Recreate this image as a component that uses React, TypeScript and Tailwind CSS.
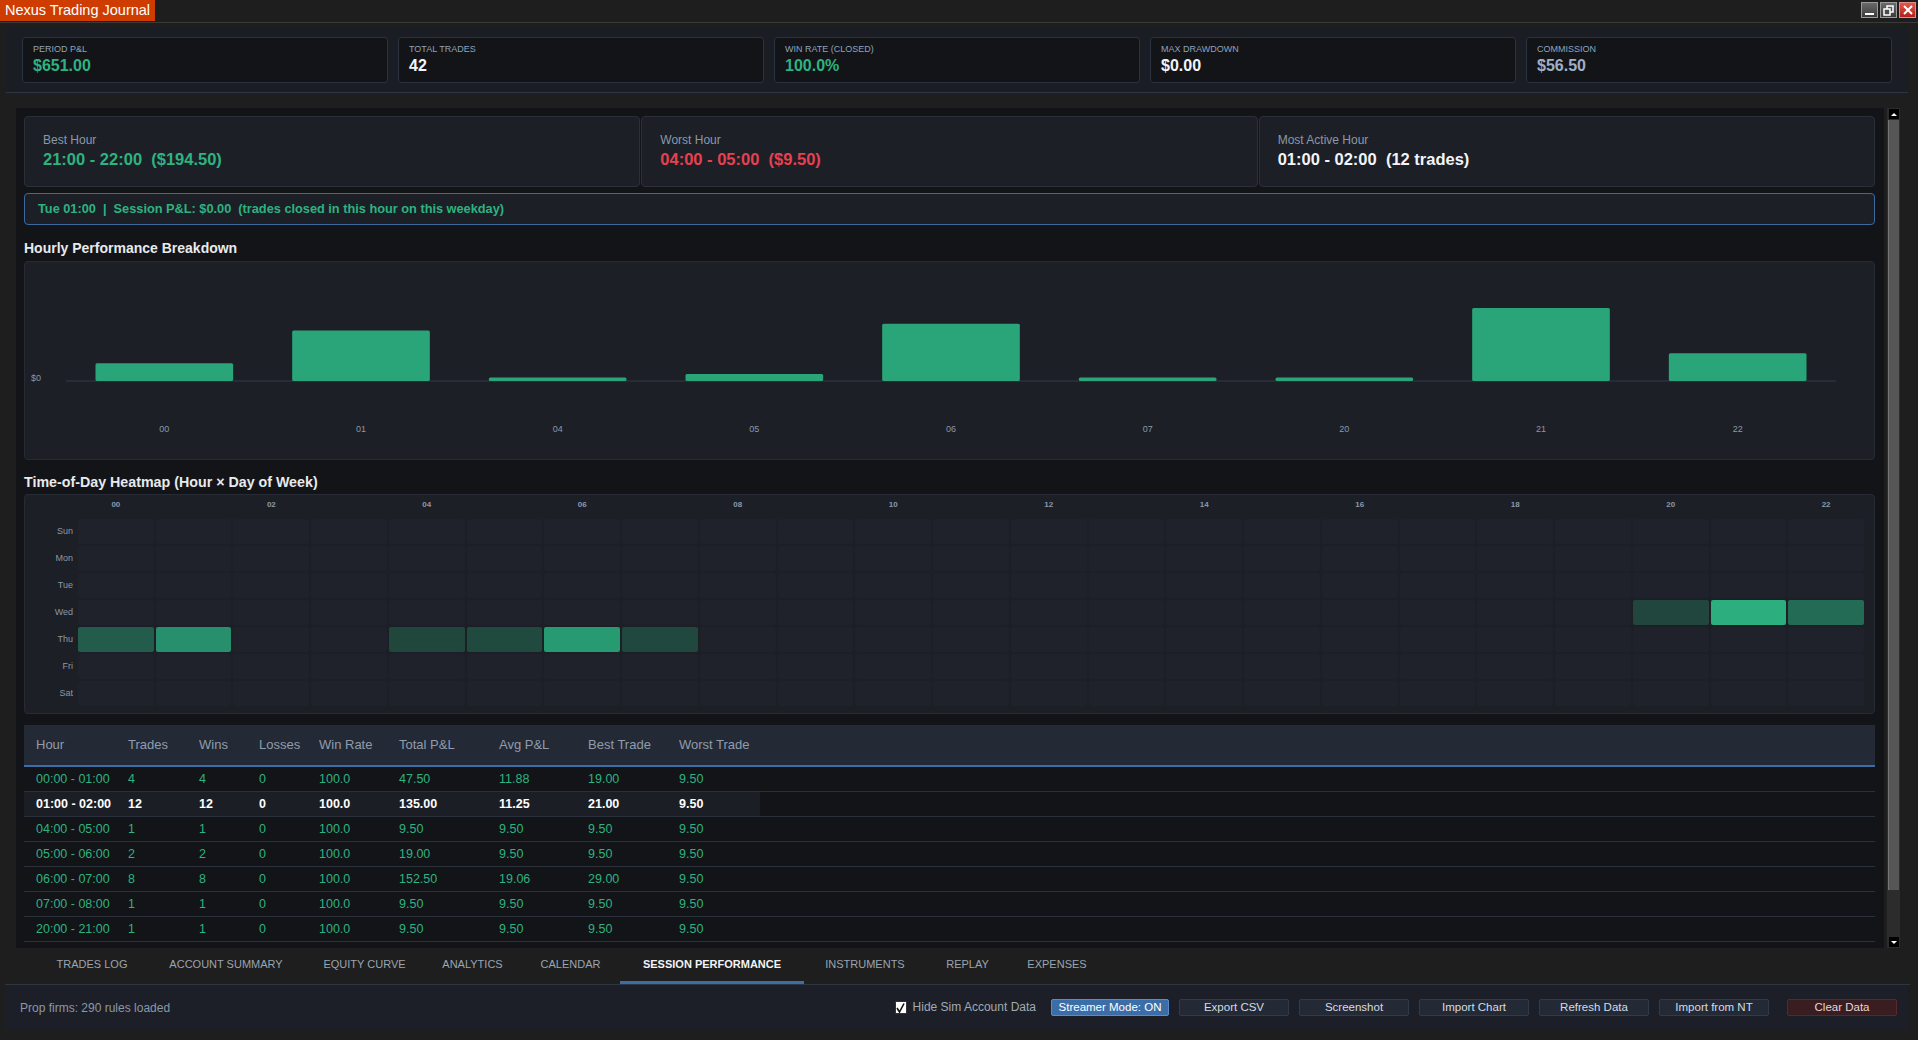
import React from "react";

const stats = [
  { label: "PERIOD P&L", value: "$651.00", color: "text-[#2db380]" },
  { label: "TOTAL TRADES", value: "42", color: "text-[#f2f4f7]" },
  { label: "WIN RATE (CLOSED)", value: "100.0%", color: "text-[#2db380]" },
  { label: "MAX DRAWDOWN", value: "$0.00", color: "text-[#f2f4f7]" },
  { label: "COMMISSION", value: "$56.50", color: "text-[#9fb0c6]" },
];

const bars = [
  { h: "00", v: 47.5 },
  { h: "01", v: 135 },
  { h: "04", v: 9.5 },
  { h: "05", v: 19 },
  { h: "06", v: 152.5 },
  { h: "07", v: 9.5 },
  { h: "20", v: 9.5 },
  { h: "21", v: 194.5 },
  { h: "22", v: 74 },
];

const days = ["Sun", "Mon", "Tue", "Wed", "Thu", "Fri", "Sat"];
const heat: Record<string, string> = {
  "3-20": "#21463d",
  "3-21": "#2cae7e",
  "3-22": "#246b56",
  "4-0": "#245c4b",
  "4-1": "#288f6c",
  "4-4": "#21473d",
  "4-5": "#214a3f",
  "4-6": "#289a72",
  "4-7": "#21483e",
};

const colW = [92, 71, 60, 60, 80, 100, 89, 91, 93];
const headers = ["Hour", "Trades", "Wins", "Losses", "Win Rate", "Total P&L", "Avg P&L", "Best Trade", "Worst Trade"];
const rows = [
  ["00:00 - 01:00", "4", "4", "0", "100.0", "47.50", "11.88", "19.00", "9.50"],
  ["01:00 - 02:00", "12", "12", "0", "100.0", "135.00", "11.25", "21.00", "9.50"],
  ["04:00 - 05:00", "1", "1", "0", "100.0", "9.50", "9.50", "9.50", "9.50"],
  ["05:00 - 06:00", "2", "2", "0", "100.0", "19.00", "9.50", "9.50", "9.50"],
  ["06:00 - 07:00", "8", "8", "0", "100.0", "152.50", "19.06", "29.00", "9.50"],
  ["07:00 - 08:00", "1", "1", "0", "100.0", "9.50", "9.50", "9.50", "9.50"],
  ["20:00 - 21:00", "1", "1", "0", "100.0", "9.50", "9.50", "9.50", "9.50"],
];

const tabs = [
  { t: "TRADES LOG", w: 110 },
  { t: "ACCOUNT SUMMARY", w: 158 },
  { t: "EQUITY CURVE", w: 119 },
  { t: "ANALYTICS", w: 97 },
  { t: "CALENDAR", w: 99 },
  { t: "SESSION PERFORMANCE", w: 184 },
  { t: "INSTRUMENTS", w: 122 },
  { t: "REPLAY", w: 83 },
  { t: "EXPENSES", w: 96 },
];

const buttons = ["Export CSV", "Screenshot", "Import Chart", "Refresh Data", "Import from NT"];

function Chart() {
  const left = 41;
  const slot = (1811 - 41) / 9;
  const bw = slot * 0.7;
  const base = 119;
  return (
    <svg width="1849" height="197" viewBox="0 0 1849 197" className="block">
      <text x="6" y="117" fontSize="9" fill="#8b98a8" dominantBaseline="middle" fontFamily="Liberation Sans, sans-serif">
        $0
      </text>
      <rect x={left} y={base - 1} width={1770} height={2} fill="#272c36" />
      {bars.map((b, i) => {
        const h = b.v * 0.375;
        const x = left + i * slot + (slot - bw) / 2;
        return (
          <g key={b.h}>
            <rect x={x} y={base - h} width={bw} height={h} rx={1.5} fill="#2aa579" />
            <text
              x={left + i * slot + slot / 2}
              y={168}
              fontSize="9"
              fill="#8b98a8"
              textAnchor="middle"
              dominantBaseline="middle"
              fontFamily="Liberation Sans, sans-serif"
            >
              {b.h}
            </text>
          </g>
        );
      })}
    </svg>
  );
}

function WinBtn({ kind }: { kind: "min" | "max" | "close" }) {
  const bg =
    kind === "close"
      ? "bg-[linear-gradient(#e4574d,#b3221a)] border-[#e88a84]"
      : "bg-[linear-gradient(#6a6a6a,#3c3c3c)] border-[#9a9a9a]";
  return (
    <div className={`w-[17px] h-[16px] border ${bg} flex items-center justify-center`}>
      {kind === "min" && <div className="w-[9px] h-[2px] bg-white mt-[7px]" />}
      {kind === "max" && (
        <svg width="11" height="11" viewBox="0 0 11 11">
          <rect x="4" y="1" width="6" height="6" fill="none" stroke="white" strokeWidth="1.5" />
          <rect x="1" y="4" width="6" height="6" fill="#4a4a4a" stroke="white" strokeWidth="1.5" />
        </svg>
      )}
      {kind === "close" && (
        <svg width="10" height="10" viewBox="0 0 10 10">
          <path d="M1 1 L9 9 M9 1 L1 9" stroke="white" strokeWidth="2" />
        </svg>
      )}
    </div>
  );
}

export default function App() {
  return (
    <div className="w-[1918px] h-[1040px] bg-[#1e1e1e] flex flex-col overflow-hidden font-['Liberation_Sans','Noto_Sans',sans-serif]">
      {/* Title bar */}
      <div className="h-[23px] flex items-start justify-between border-b border-[#3a3a3a] shrink-0">
        <div className="h-[21px] bg-[#cf3c00] px-[5px] flex items-center text-white text-[14.5px] leading-none">
          Nexus Trading Journal
        </div>
        <div className="flex gap-[2px] mt-[2px] mr-[2px]">
          <WinBtn kind="min" />
          <WinBtn kind="max" />
          <WinBtn kind="close" />
        </div>
      </div>

      {/* Stats panel */}
      <div className="mt-[4px] ml-[6px] w-[1902px] h-[66px] bg-[#1a1d24] border-b border-[#2e3646] px-[16px] pt-[10px] flex gap-[10px] shrink-0">
        {stats.map((s) => (
          <div
            key={s.label}
            className="w-[366px] h-[46px] rounded-[3px] border border-[#2a3140] bg-[#121418] px-[10px] pt-[6px]"
          >
            <div className="text-[9px] leading-[11px] text-[#8fa3ba]">{s.label}</div>
            <div className={`text-[16px] leading-[19px] font-bold mt-[1px] ${s.color}`}>{s.value}</div>
          </div>
        ))}
      </div>

      {/* Main area */}
      <div className="mt-[15px] ml-[16px] h-[840px] flex shrink-0">
        <div className="w-[1868px] h-[840px] bg-[#131418] overflow-hidden pl-[8px] pr-[9px] pt-[8px]">
          {/* top cards */}
          <div className="flex gap-[1px] h-[71px]">
            {[
              { l: "Best Hour", v: "21:00 - 22:00  ($194.50)", c: "text-[#2db380]" },
              { l: "Worst Hour", v: "04:00 - 05:00  ($9.50)", c: "text-[#e8404f]" },
              { l: "Most Active Hour", v: "01:00 - 02:00  (12 trades)", c: "text-[#f2f4f7]" },
            ].map((c) => (
              <div
                key={c.l}
                className="flex-1 rounded-[4px] border border-[#2a303a] bg-[#1c1f26] pl-[18px] pt-[16px]"
              >
                <div className="text-[12px] leading-[14px] text-[#8b98a8]">{c.l}</div>
                <div className={`text-[16.5px] leading-[20px] font-bold mt-[2px] whitespace-pre ${c.c}`}>{c.v}</div>
              </div>
            ))}
          </div>

          {/* info bar */}
          <div className="mt-[6px] h-[32px] rounded-[4px] border border-[#3a6aa0] bg-[#1c1f26] flex items-center pl-[13px] text-[12.75px] font-bold text-[#2db380] whitespace-pre">
            {"Tue 01:00  |  Session P&L: $0.00  (trades closed in this hour on this weekday)"}
          </div>

          <div className="mt-[15px] mb-[5px] h-[16px] leading-[16px] text-[14px] font-bold text-[#e8eaed]">
            Hourly Performance Breakdown
          </div>
          <div className="h-[199px] rounded-[4px] border border-[#262b35] bg-[#1c1f26]">
            <Chart />
          </div>

          <div className="mt-[14px] mb-[4px] h-[16px] leading-[16px] text-[14.25px] font-bold text-[#e8eaed]">
            Time-of-Day Heatmap (Hour × Day of Week)
          </div>
          <div className="h-[220px] rounded-[4px] border border-[#262b35] bg-[#1c1f26] pt-[4px] pr-[10px] flex">
            <div className="w-[48px] mr-[5px] shrink-0">
              <div className="h-[11px]" />
              <div className="mt-[9px] flex flex-col gap-[2px]">
                {days.map((d) => (
                  <div key={d} className="h-[25px] flex items-center justify-end text-[9px] text-[#8b98a8]">
                    {d}
                  </div>
                ))}
              </div>
            </div>
            <div className="flex-1">
              <div className="h-[11px] grid grid-cols-[repeat(23,minmax(0,1fr))] gap-x-[2px]">
                {Array.from({ length: 23 }).map((_, h) => (
                  <div key={h} className="text-center text-[8px] leading-[11px] font-bold text-[#8b98a8]">
                    {h % 2 === 0 ? String(h).padStart(2, "0") : ""}
                  </div>
                ))}
              </div>
              <div className="mt-[9px] grid grid-cols-[repeat(23,minmax(0,1fr))] gap-[2px]">
                {days.map((_, d) =>
                  Array.from({ length: 23 }).map((__, h) => {
                    const c = heat[`${d}-${h}`];
                    return (
                      <div
                        key={`${d}-${h}`}
                        className={`h-[25px] rounded-[2px] ${c ? "" : "bg-[#1f222a]"}`}
                        style={c ? { backgroundColor: c } : undefined}
                      />
                    );
                  })
                )}
              </div>
            </div>
          </div>

          {/* table */}
          <div className="mt-[11px] bg-[#131418]">
            <div className="h-[42px] bg-[#232a36] border-b-2 border-[#3a6ea8] flex items-center text-[13px] text-[#909cac]">
              {headers.map((h, i) => (
                <div key={h} className="pl-[12px] shrink-0" style={{ width: colW[i] }}>
                  {h}
                </div>
              ))}
            </div>
            {rows.map((r, ri) => {
              const hl = ri === 1;
              return (
                <div key={ri} className="h-[25px] border-b border-[#2a303b] flex items-stretch">
                  {r.map((v, i) => (
                    <div
                      key={i}
                      className={`pl-[12px] shrink-0 flex items-center text-[12.5px] ${
                        hl ? "bg-[#1b1e25] text-white font-bold" : "text-[#2db380]"
                      }`}
                      style={{ width: colW[i] }}
                    >
                      {v}
                    </div>
                  ))}
                </div>
              );
            })}
            <div className="h-[25px]" />
          </div>
        </div>

        {/* scrollbar */}
        <div className="ml-[3px] w-[13px] h-[840px] bg-[#2c2c2c] flex flex-col items-center">
          <div className="w-[10px] h-[10px] mt-[1px] bg-black flex items-center justify-center">
            <div className="w-0 h-0 border-l-[3px] border-r-[3px] border-b-[3px] border-l-transparent border-r-transparent border-b-white" />
          </div>
          <div className="w-[11px] h-[770px] mt-[1px] bg-[#565656] border-l border-[#777]" />
          <div className="flex-1" />
          <div className="w-[10px] h-[10px] mb-[1px] bg-black flex items-center justify-center">
            <div className="w-0 h-0 border-l-[3px] border-r-[3px] border-t-[3px] border-l-transparent border-r-transparent border-t-white" />
          </div>
        </div>
      </div>

      {/* Tabs */}
      <div className="ml-[5px] w-[1905px] h-[37px] border-b border-[#30363f] flex pl-[32px] shrink-0">
        {tabs.map(({ t, w }) => {
          const active = t === "SESSION PERFORMANCE";
          return (
            <div
              key={t}
              style={{ width: w }}
              className={`relative shrink-0 text-center pt-[9px] text-[11px] leading-[14px] ${
                active ? "text-[#f2f4f7] font-bold" : "text-[#9aa5b1]"
              }`}
            >
              {t}
              {active && <div className="absolute left-0 right-0 bottom-0 h-[3px] bg-[#3a6ea8]" />}
            </div>
          );
        })}
      </div>

      {/* Status bar */}
      <div className="ml-[5px] w-[1902px] h-[45px] bg-[#1c1f27] flex items-center justify-between pl-[15px] pr-[10px] shrink-0">
        <div className="text-[12px] text-[#8b98a8]">Prop firms: 290 rules loaded</div>
        <div className="flex items-center">
          <div className="w-[12px] h-[13px] bg-white border border-[#333] flex items-center justify-center">
            <svg width="9" height="10" viewBox="0 0 9 10">
              <path d="M1 5 L3.5 9 L8 0.5" stroke="#111" strokeWidth="1.6" fill="none" />
            </svg>
          </div>
          <div className="ml-[6px] text-[12px] text-[#a0aab5] mb-[2px]">Hide Sim Account Data</div>
          <div className="ml-[15px] w-[118px] h-[17px] rounded-[2px] bg-[#3b6ea8] border border-[#5a8cc8] text-white text-[11.5px] flex items-center justify-center">
            Streamer Mode: ON
          </div>
          {buttons.map((b) => (
            <div
              key={b}
              className="ml-[10px] w-[110px] h-[17px] rounded-[2px] bg-[#232a36] border border-[#323b49] text-[#d6dbe2] text-[11.5px] flex items-center justify-center"
            >
              {b}
            </div>
          ))}
          <div className="ml-[18px] w-[110px] h-[17px] rounded-[2px] bg-[#3a1d20] border border-[#57292d] text-[#e6d6d6] text-[11.5px] flex items-center justify-center">
            Clear Data
          </div>
        </div>
      </div>
    </div>
  );
}
